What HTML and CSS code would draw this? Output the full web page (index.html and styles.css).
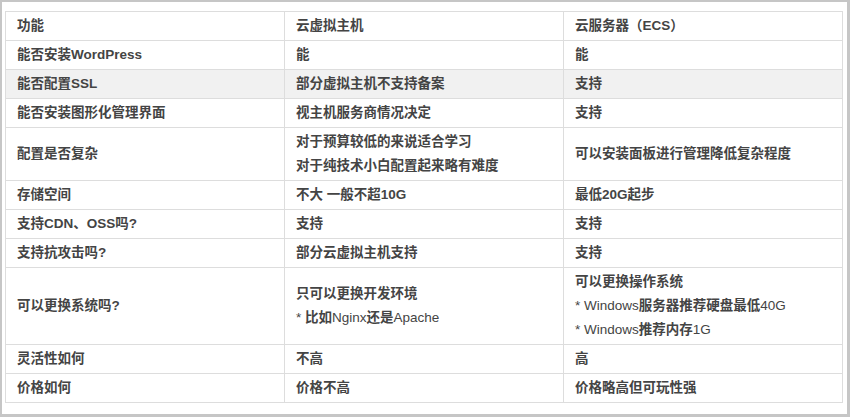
FILE: index.html
```html
<!DOCTYPE html>
<html lang="zh-CN">
<head>
<meta charset="utf-8">
<title>云虚拟主机 vs 云服务器</title>
<link rel="stylesheet" href="styles.css">
</head>
<body>
<div class="frame">
  <table class="cmp">
    <colgroup><col class="c"><col class="c"><col class="c"></colgroup>
    <tbody>
      <tr><td>功能</td><td>云虚拟主机</td><td>云服务器（ECS）</td></tr>
      <tr><td>能否安装WordPress</td><td>能</td><td>能</td></tr>
      <tr class="hl"><td>能否配置SSL</td><td>部分虚拟主机不支持备案</td><td>支持</td></tr>
      <tr><td>能否安装图形化管理界面</td><td>视主机服务商情况决定</td><td>支持</td></tr>
      <tr><td>配置是否复杂</td><td><div>对于预算较低的来说适合学习</div><div>对于纯技术小白配置起来略有难度</div></td><td>可以安装面板进行管理降低复杂程度</td></tr>
      <tr><td>存储空间</td><td>不大 一般不超10G</td><td>最低20G起步</td></tr>
      <tr><td>支持CDN、OSS吗?</td><td>支持</td><td>支持</td></tr>
      <tr><td>支持抗攻击吗?</td><td>部分云虚拟主机支持</td><td>支持</td></tr>
      <tr><td>可以更换系统吗?</td><td><div>只可以更换开发环境</div><div><span class="n">* </span>比如<span class="n">Nginx</span>还是<span class="n">Apache</span></div></td><td><div>可以更换操作系统</div><div><span class="n">* Windows</span>服务器推荐硬盘最低<span class="n">40G</span></div><div><span class="n">* Windows</span>推荐内存<span class="n">1G</span></div></td></tr>
      <tr><td>灵活性如何</td><td>不高</td><td>高</td></tr>
      <tr><td>价格如何</td><td>价格不高</td><td>价格略高但可玩性强</td></tr>
    </tbody>
  </table>
</div>
</body>
</html>
```
FILE: styles.css
```css
html, body {
  margin: 0;
  padding: 0;
  background: #fff;
}
.frame {
  box-sizing: border-box;
  width: 850px;
  height: 417px;
  border-style: solid;
  border-color: #c6c6c6;
  border-width: 2px 3px 3px 2px;
  padding: 9px 4px 0 3px;
}
.cmp {
  width: 838px;
  border-collapse: collapse;
  table-layout: fixed;
  font-family: "Liberation Sans", "Noto Sans CJK SC", sans-serif;
  font-size: 13.5px;
  font-weight: bold;
  color: #444;
}
.cmp td {
  border: 1px solid #dddddd;
  padding: 2px 11px;
  line-height: 24px;
  height: 24px;
  vertical-align: middle;
  white-space: nowrap;
}
.cmp tr.hl td {
  background: #f1f1f1;
}
.n {
  font-weight: normal;
}
```
